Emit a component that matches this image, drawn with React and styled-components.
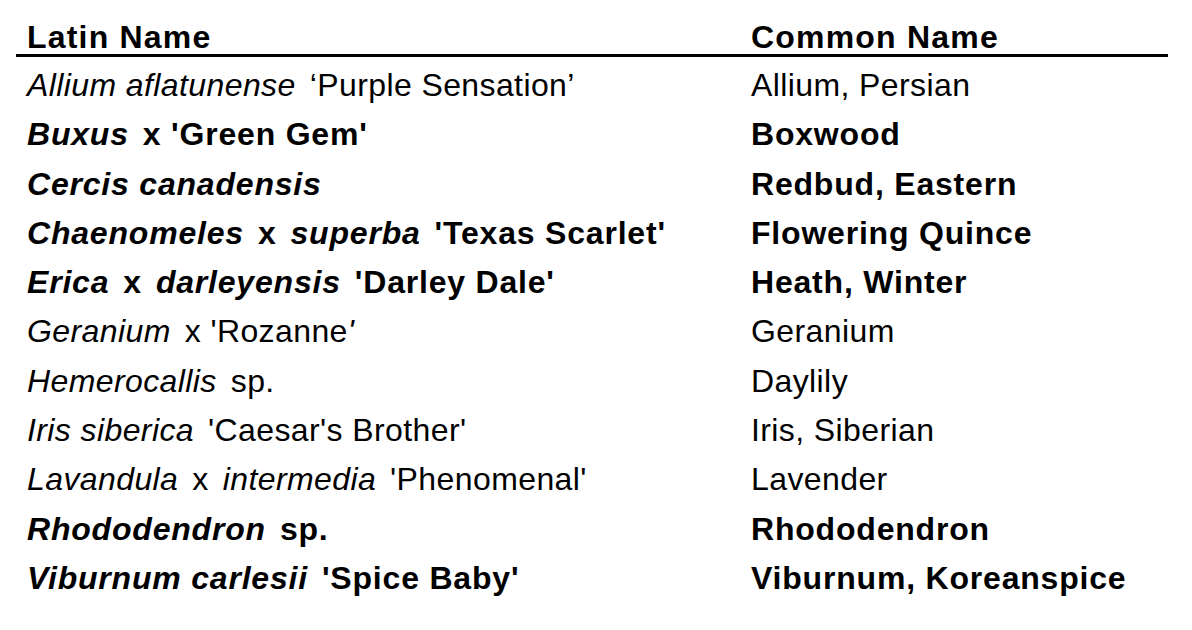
import React from "react";
import styled, { createGlobalStyle } from "styled-components";

const Global = createGlobalStyle`
  html, body { margin: 0; padding: 0; background: #fff; }
  body { font-family: "Liberation Sans", Arial, sans-serif; color: #000; }
`;

const Table = styled.div`
  margin: 20px 0 0 16px;
  width: 1152px;
  display: grid;
  grid-template-columns: 724px 1fr;
  font-size: 32px;
`;

const HeadCell = styled.div`
  font-weight: bold;
  line-height: 34px;
  letter-spacing: 1.2px;
  padding-left: 11px;
  border-bottom: 3px solid #000;
  margin-bottom: 4px;
`;

const Cell = styled.div`
  line-height: 49.3px;
  padding-left: 11px;
  white-space: nowrap;
  font-weight: ${(p) => (p.$bold ? "bold" : "normal")};
  letter-spacing: ${(p) => (p.$bold ? "0.8px" : "0.4px")};
`;

const Part = styled.span`
  font-style: ${(p) => (p.$italic ? "italic" : "normal")};
  & + & { margin-left: 14px; }
`;

const Quote = styled.span`
  font-style: italic;
`;

const rows = [
  { bold: false, latin: [["Allium aflatunense", true], ["‘Purple Sensation’", false]], common: "Allium, Persian" },
  { bold: true, latin: [["Buxus", true], ["x 'Green Gem'", false]], common: "Boxwood" },
  { bold: true, latin: [["Cercis canadensis", true]], common: "Redbud, Eastern" },
  { bold: true, latin: [["Chaenomeles", true], ["x", false], ["superba", true], ["'Texas Scarlet'", false]], common: "Flowering Quince" },
  { bold: true, latin: [["Erica", true], ["x", false], ["darleyensis", true], ["'Darley Dale'", false]], common: "Heath, Winter" },
  { bold: false, latin: [["Geranium", true], ["x 'Rozanne", false]], tail: "'", common: "Geranium" },
  { bold: false, latin: [["Hemerocallis", true], ["sp.", false]], common: "Daylily" },
  { bold: false, latin: [["Iris siberica", true], ["'Caesar's Brother'", false]], common: "Iris, Siberian" },
  { bold: false, latin: [["Lavandula", true], ["x", false], ["intermedia", true], ["'Phenomenal'", false]], common: "Lavender" },
  { bold: true, latin: [["Rhododendron", true], ["sp.", false]], common: "Rhododendron" },
  { bold: true, latin: [["Viburnum carlesii", true], ["'Spice Baby'", false]], common: "Viburnum, Koreanspice" },
];

export default function App() {
  return (
    <>
      <Global />
      <Table>
        <HeadCell>Latin Name</HeadCell>
        <HeadCell>Common Name</HeadCell>
        {rows.map((r, i) => (
          <React.Fragment key={i}>
            <Cell $bold={r.bold}>
              {r.latin.map(([t, it], j) => (
                <Part key={j} $italic={it}>{t}</Part>
              ))}
              {r.tail && <Quote>{r.tail}</Quote>}
            </Cell>
            <Cell $bold={r.bold}>{r.common}</Cell>
          </React.Fragment>
        ))}
      </Table>
    </>
  );
}
